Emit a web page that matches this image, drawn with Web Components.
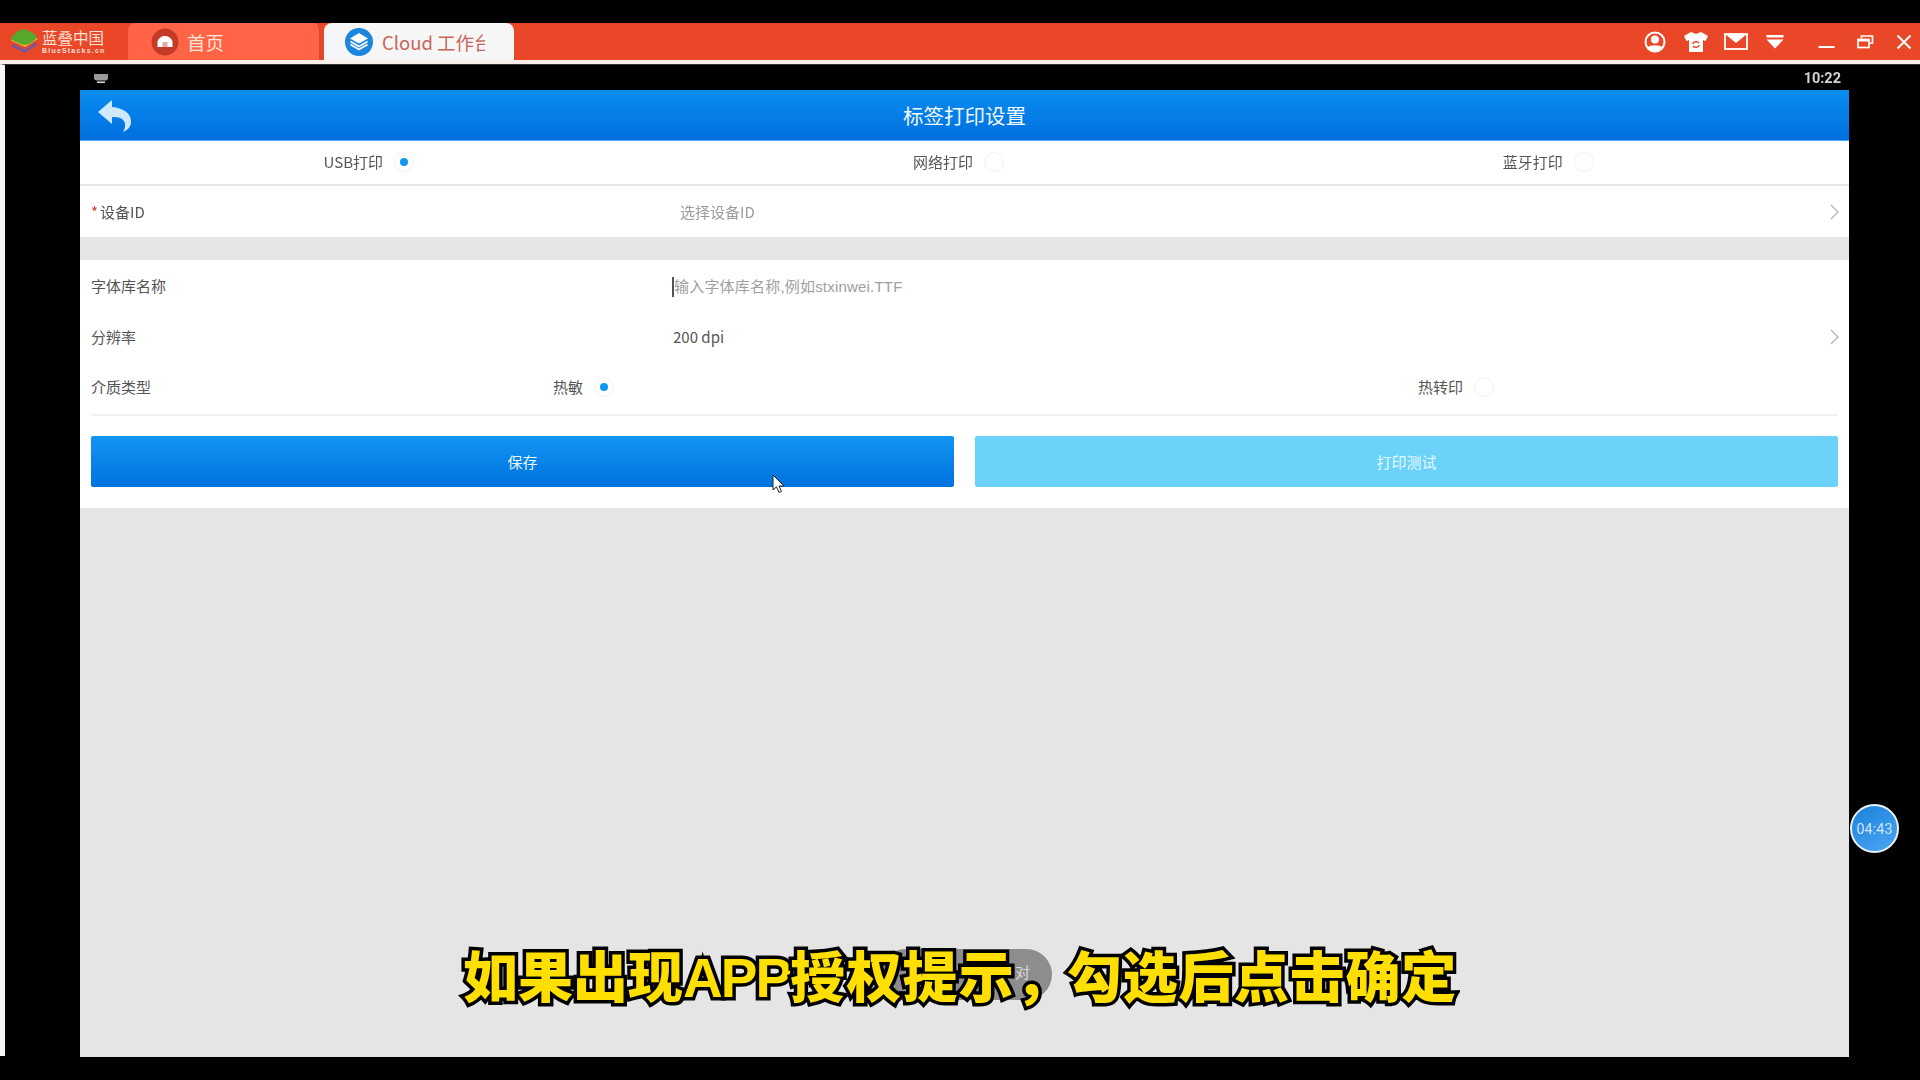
<!DOCTYPE html>
<html lang="zh-CN">
<head>
<meta charset="utf-8">
<title>标签打印设置</title>
<style>
  html, body { margin: 0; padding: 0; background: #000; }
  body { width: 1920px; height: 1080px; overflow: hidden; font-family: "Noto Sans CJK SC", "Noto Sans", sans-serif; }
</style>
</head>
<body>
<bs-window>
  <bs-titlebar slot="titlebar"></bs-titlebar>
  <bs-statusbar slot="statusbar">10:22</bs-statusbar>
  <print-settings slot="app"></print-settings>
</bs-window>

<script>
// SMALL HELPER: EVERY ELEMENT GETS ITS OWN OPEN SHADOW ROOT FROM A TEMPLATE STRING
function define(name, html) {
    const template = document.createElement('template');
    template.innerHTML = html;
    customElements.define(name, class extends HTMLElement {
        constructor() {
            super();
            this.attachShadow({ mode: 'open' }).appendChild(template.content.cloneNode(true));
        }
    });
}

const CJK = `"Noto Sans CJK SC", "Noto Sans", sans-serif`;

// PAGE SHELL: BLACK BAND, TITLE BAR, EMULATOR SCREEN, OVERLAYS
define('bs-window', `
    <style>
        :host { display: block; position: relative; width: 1920px; height: 1080px; background: #000; overflow: hidden; }
        .soft { display: flex; flex-direction: column; height: 1080px; padding-top: 23px; box-sizing: border-box; filter: blur(.6px); }
        .line { height: 4px; background: #fbefeb; flex: none; }
        .screen { display: flex; flex-direction: column; height: 992px; border-left: 5px solid #f6f6f6; border-top: 1px solid #333; box-sizing: border-box; }
        .app { display: block; margin: 0 71px 0 75px; flex: 1; min-height: 0; }
    </style>
    <div class="soft">
        <slot name="titlebar"></slot>
        <div class="line"></div>
        <div class="screen">
            <slot name="statusbar"></slot>
            <div class="app"><slot name="app"></slot></div>
        </div>
        <bs-timer>04:43</bs-timer>
        <bs-cursor></bs-cursor>
        <bs-toast>对</bs-toast>
    </div>
    <bs-caption>如果出现<span style="letter-spacing:-2px">APP</span><span style="letter-spacing:1.2px">授权提示</span><span style="letter-spacing:-3px">，</span><span style="letter-spacing:.7px">勾选后点击确定</span></bs-caption>
`);

// RED TITLE BAR WITH LOGO, TABS AND WINDOW ICONS
define('bs-titlebar', `
    <style>
        :host { display: flex; flex: none; height: 37px; background: #ea4729; font-family: ${CJK}; align-items: stretch; }
        .logo { width: 128px; flex: none; display: flex; align-items: center; padding-left: 9px; box-sizing: border-box; gap: 3px; }
        .brand { display: flex; flex-direction: column; color: #fbe0d6; line-height: 1; }
        .brand b { font-weight: 400; font-size: 15.5px; height: 17px; }
        .brand i { font: bold 7px "Liberation Sans", sans-serif; letter-spacing: 1.2px; }
        .tabs { display: flex; gap: 2px; }
        .icons { margin-left: auto; display: flex; align-items: center; }
        .icons svg { display: block; flex: none; }
    </style>
    <div class="logo">
        <svg width="30" height="27" viewBox="0 0 30 27">
            <path d="M15 9 29 16 16 25 2 18Z" fill="#6d5aa5"/>
            <path d="M15 6 29 13 16 22 2 15Z" fill="#e2463a"/>
            <path d="M15 4 29 11 16 19 2 12.500Z" fill="#f4c120"/>
            <path d="M14 1C18 1 28 7 28 9.500 28 11 20 17 16 17 12 17 2 12 2 10.500 2 8 11 1 14 1Z" fill="#55a82c"/>
        </svg>
        <div class="brand"><b>蓝叠中国</b><i>BlueStacks.cn</i></div>
    </div>
    <div class="tabs">
        <bs-tab home>
            <svg slot="icon" width="28" height="28" viewBox="0 0 28 28">
                <circle cx="14" cy="14" r="13.500" fill="#c63a28"/>
                <path d="M6.500 13.500C8 9.500 11 8 14 8s6 1.500 7.500 5.500V19h-15Z" fill="#fff"/>
                <rect x="11.500" y="14" width="5" height="5" fill="#e8a9a0"/>
            </svg>
            首页
        </bs-tab>
        <bs-tab active>
            <svg slot="icon" width="28" height="28" viewBox="0 0 28 28">
                <circle cx="14" cy="14" r="14" fill="#1b86de"/>
                <path d="M14 5 23 10.500 14 15.500 5 10.500Z" fill="#fff"/>
                <path d="M5.500 13.500 14 18.500 22.500 13.500M5.500 16.500 14 21.500 22.500 16.500" fill="none" stroke="#fff" stroke-width="1.700"/>
            </svg>
            Cloud 工作台
        </bs-tab>
    </div>
    <div class="icons">
        <svg width="24" height="24" viewBox="0 0 24 24" style="margin-right:16px">
            <circle cx="12" cy="12" r="9.500" fill="none" stroke="#fff" stroke-width="2"/>
            <circle cx="12" cy="9.500" r="4" fill="#fff"/>
            <path d="M4.500 17.500C7 14.500 17 14.500 19.500 17.500 17.500 22 6.500 22 4.500 17.500Z" fill="#fff"/>
        </svg>
        <svg width="26" height="22" viewBox="0 0 26 22" style="margin-right:15px">
            <path d="M8 1 13 3 18 1 25 5 22.500 10 20 9V21H6V9L3.500 10 1 5Z" fill="#fff"/>
            <path d="M9.500 13C10.500 10.500 14.500 10 16 12M16.500 14C15.500 16.500 11.500 17 10 15" fill="none" stroke="#ea4729" stroke-width="1.400"/>
        </svg>
        <svg width="24" height="17" viewBox="0 0 24 17" style="margin-right:18px">
            <rect x="1" y="1" width="22" height="15" fill="none" stroke="#fff" stroke-width="1.800"/>
            <path d="M1 1H23L12 10Z" fill="#fff"/>
        </svg>
        <svg width="18" height="14" viewBox="0 0 18 14" style="margin-right:34px">
            <rect x="0.500" y="0" width="17" height="2.500" fill="#fff"/>
            <path d="M0.500 4.500H17.500L9 13.500Z" fill="#fff"/>
        </svg>
        <svg width="17" height="14" viewBox="0 0 17 14" style="margin-right:22px">
            <rect x="0.500" y="11" width="16" height="2" fill="#fff"/>
        </svg>
        <svg width="17" height="14" viewBox="0 0 17 14" style="margin-right:22px">
            <path d="M4.500 3.500V1H15.500V8H12.500" fill="none" stroke="#fff" stroke-width="1.700"/>
            <rect x="1" y="4.500" width="11" height="8" fill="none" stroke="#fff" stroke-width="1.700"/>
            <rect x="1" y="4" width="11" height="2.500" fill="#fff"/>
        </svg>
        <svg width="16" height="16" viewBox="0 0 16 16" style="margin-right:8px">
            <path d="M1.500 1.500 14.500 14.500M14.500 1.500 1.500 14.500" stroke="#fff" stroke-width="2" fill="none"/>
        </svg>
    </div>
`);

define('bs-tab', `
    <style>
        :host { display: flex; align-items: center; box-sizing: border-box; width: 194px; height: 37px; border-radius: 8px 8px 0 0; background: #ff6446; color: #ffe6dc; font-size: 18.500px; padding-left: 23px; gap: 8px; white-space: nowrap; overflow: hidden; border-right: 3px solid #dc4a2d; }
        :host([active]) { width: 190px; height: 41px; background: #f6f6f6; color: #c9655c; padding: 0 29px 4px 21px; gap: 9px; border-right: 0; }
        .label { overflow: hidden; min-width: 0; }
        ::slotted(svg) { display: block; flex: none; }
    </style>
    <slot name="icon"></slot>
    <span class="label"><slot></slot></span>
`);

// ANDROID STATUS BAR
define('bs-statusbar', `
    <style>
        :host { display: flex; flex: none; height: 25px; box-sizing: border-box; padding: 1px 79px 0 89px; align-items: center; justify-content: space-between; color: #d2d2d2; font: bold 14.500px Roboto, "Liberation Sans", sans-serif; }
        svg { display: block; }
    </style>
    <svg width="14" height="9" viewBox="0 0 14 9">
        <path d="M0 0H14V5L12 6.500H2L0 5Z" fill="#9a9a9a"/>
        <rect x="3" y="7.500" width="8" height="1.500" fill="#ddd"/>
    </svg>
    <span><slot></slot></span>
`);

// THE SETTINGS FORM
define('print-settings', `
    <style>
        :host { display: flex; flex-direction: column; height: 967px; background: #e5e5e6; font-family: ${CJK}; font-size: 15px; color: #555; }
        .head { flex: none; height: 50px; display: flex; align-items: center; justify-content: center; position: relative; background: linear-gradient(#0a8df0, #006fdf); border-bottom: 1px solid #49a8f3; color: #f1f8ff; font-size: 20.500px; }
        .back { position: absolute; left: 17px; top: 9px; }
        .modes { flex: none; height: 43px; box-sizing: content-box; background: #fff; border-bottom: 2px solid #e2e8ec; display: grid; grid-template-columns: repeat(3, 1fr); }
        .modes bs-radio { justify-content: center; padding: 0 12px 2px 0; }
        .device { flex: none; height: 51px; background: #fff; }
        .gap { flex: none; height: 23px; }
        .form { flex: none; background: #fff; }
        .media { display: grid; grid-template-columns: 462px 865px auto; align-items: center; margin: 0 11px; padding-bottom: 3px; border-bottom: 2px solid #f0f3f4; box-sizing: border-box; height: 54px; }
        .star { color: #e0352b; margin-right: 2px; }
        .hint { color: #9b9b9b; padding-left: 7px; }
        .input { color: #a0a0a0; font: 15px "Liberation Sans", ${CJK}; letter-spacing: .2px; border-left: 2px solid #555; margin-left: -1px; line-height: 20px; white-space: nowrap; display: inline-block; }
        .actions { display: grid; grid-template-columns: 1fr 1fr; gap: 21px; padding: 20px 11px 21px; }
    </style>
    <div class="head">
        <svg class="back" width="36" height="34" viewBox="0 0 36 34">
            <path d="M1 13 15 1 15 8C27 9 35 15 34 24 33.500 28 31 31 26 33 29 28 29 23 25 20 22 18 18 18 15 18V25Z" fill="#cfe8fc"/>
        </svg>
        <span>标签打印设置</span>
    </div>
    <div class="modes">
        <bs-radio checked>USB打印</bs-radio>
        <bs-radio>网络打印</bs-radio>
        <bs-radio>蓝牙打印</bs-radio>
    </div>
    <form-row class="device" arrow>
        <span slot="label"><span class="star">*</span>设备ID</span>
        <span class="hint">选择设备ID</span>
    </form-row>
    <div class="gap"></div>
    <div class="form">
        <form-row>
            <span slot="label">字体库名称</span>
            <span class="input">输入字体库名称,例如stxinwei.TTF</span>
        </form-row>
        <form-row arrow>
            <span slot="label">分辨率</span>
            200 dpi
        </form-row>
        <div class="media">
            <span>介质类型</span>
            <bs-radio checked>热敏</bs-radio>
            <bs-radio>热转印</bs-radio>
        </div>
        <div class="actions">
            <bs-button>保存</bs-button>
            <bs-button disabled>打印测试</bs-button>
        </div>
    </div>
`);

define('form-row', `
    <style>
        :host { display: flex; align-items: center; height: 51px; padding: 0 10px 0 11px; }
        .label { width: 582px; flex: none; }
        .value { flex: 1; min-width: 0; }
        svg { display: none; flex: none; }
        :host([arrow]) svg { display: block; }
    </style>
    <div class="label"><slot name="label"></slot></div>
    <div class="value"><slot></slot></div>
    <svg width="9" height="16" viewBox="0 0 9 16">
        <path d="M1 1 8 8 1 15" fill="none" stroke="#b4b4b4" stroke-width="1.300"/>
    </svg>
`);

define('bs-radio', `
    <style>
        :host { display: flex; align-items: center; gap: 11px; font-size: 15px; color: #555; }
        i { display: block; width: 20px; height: 20px; border-radius: 50%; border: 1px solid #f2f2f2; box-sizing: border-box; position: relative; }
        :host([checked]) i::after { content: ""; position: absolute; left: 5px; top: 5px; width: 8px; height: 8px; border-radius: 50%; background: #0e98f2; }
    </style>
    <span><slot></slot></span><i></i>
`);

define('bs-button', `
    <style>
        :host { display: flex; height: 51px; align-items: center; justify-content: center; border-radius: 2px; color: #eaf6ff; font-size: 15px; background: linear-gradient(#1295f5, #0072dc); }
        :host([disabled]) { background: #6bd3f9; color: #e6f8ff; }
    </style>
    <slot></slot>
`);

// THINGS THAT FLOAT OVER THE EMULATOR SCREEN
define('bs-timer', `
    <style>
        :host { position: absolute; left: 1850px; top: 804px; width: 49px; height: 49px; box-sizing: border-box; padding-top: 2px; border-radius: 50%; border: 2px solid #e8f2fb; background: linear-gradient(150deg, #1b82dc, #4ba6f2); color: #cfe6ff; font: 14.500px Roboto, "Liberation Sans", sans-serif; display: flex; align-items: center; justify-content: center; }
    </style>
    <slot></slot>
`);

define('bs-cursor', `
    <style>
        :host { position: absolute; left: 772px; top: 474px; display: block; line-height: 0; }
    </style>
    <svg width="13" height="20" viewBox="0 0 13 20">
        <path d="M1 1V16L4.500 12.800 7 18.500 9.500 17.500 7 12H12Z" fill="#fff" stroke="#222" stroke-width="1"/>
    </svg>
`);

define('bs-toast', `
    <style>
        :host { position: absolute; left: 880px; top: 949px; width: 172px; height: 51px; border-radius: 26px; background: #8d8d8d; color: #d8d8d8; font-size: 15px; display: flex; align-items: center; justify-content: flex-end; padding: 0 22px 6px 0; box-sizing: border-box; font-family: ${CJK}; }
    </style>
    <slot></slot>
`);

define('bs-caption', `
    <style>
        :host { position: absolute; left: 0; right: 0; top: 936px; display: block; text-align: center; white-space: nowrap; font: 900 55px/84px "Liberation Sans", ${CJK}; color: #ffdf00; -webkit-text-stroke: 7px #000; paint-order: stroke fill; }
    </style>
    <slot></slot>
`);
</script>
</body>
</html>
